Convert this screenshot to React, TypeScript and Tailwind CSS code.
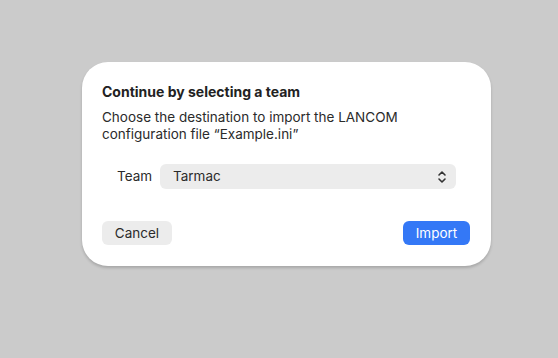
import React from "react";

export default function App() {
  return (
    <div
      className="w-[558px] h-[358px] bg-[#cbcbcb] pl-[82px] pt-[62px]"
      style={{ fontFamily: 'Inter, "Liberation Sans", Arial, sans-serif' }}
    >
      <div className="w-[409px] h-[204px] rounded-[26px] bg-white shadow-[0_2px_3px_rgba(0,0,0,0.18)] px-[20px] pt-[21px] flex flex-col">
        <div className="text-[14px] font-bold leading-[18px] text-[#222]">
          Continue by selecting a team
        </div>
        <div className="mt-[8px] text-[13.5px] leading-[17px] text-[#2b2b2b]">
          Choose the destination to import the LANCOM
          <br />
          configuration file “Example.ini”
        </div>
        <div className="mt-[21px] flex items-center">
          <div className="w-[58px] pl-[15px] text-[13.5px] text-[#2b2b2b]">Team</div>
          <div className="w-[296px] h-[25px] rounded-[6px] bg-[#ececec] flex items-center justify-between pl-[13px] pr-[9px] text-[13.5px] text-[#2b2b2b]">
            <span>Tarmac</span>
            <svg width="10" height="14" viewBox="0 0 10 14" fill="none" stroke="#333" strokeWidth="1.6" strokeLinecap="round" strokeLinejoin="round">
              <path d="M2 5 L5 2 L8 5" />
              <path d="M2 9 L5 12 L8 9" />
            </svg>
          </div>
        </div>
        <div className="mt-[32px] flex items-center justify-between">
          <div className="w-[70px] h-[24px] rounded-[6px] bg-[#ececec] flex items-center justify-center text-[13.5px] text-[#2b2b2b]">
            Cancel
          </div>
          <div className="w-[67px] h-[24px] rounded-[6px] bg-[#3478f6] flex items-center justify-center text-[13.5px] text-white mr-[1px]">
            Import
          </div>
        </div>
      </div>
    </div>
  );
}
